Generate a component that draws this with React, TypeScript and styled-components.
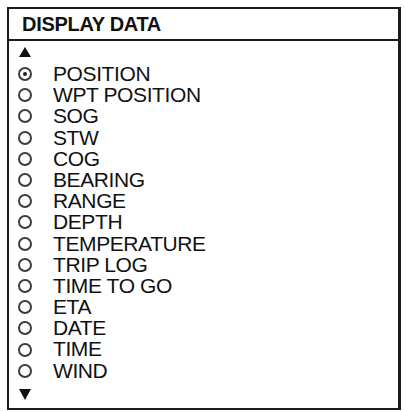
import React from "react";
import styled, { createGlobalStyle } from "styled-components";

const GlobalStyle = createGlobalStyle`
  html, body {
    margin: 0;
    padding: 0;
    background: #ffffff;
  }
  body {
    font-family: "Liberation Sans", Arial, Helvetica, sans-serif;
    color: #111111;
  }
`;

const Panel = styled.div`
  box-sizing: border-box;
  width: 394px;
  margin: 7px 0 0 7px;
  border: 2px solid #1c1c1c;
  border-right-width: 3px;
  background: #ffffff;
`;

const Title = styled.div`
  height: 30px;
  line-height: 30px;
  padding-left: 13px;
  border-bottom: 2px solid #1c1c1c;
  font-size: 20px;
  font-weight: 700;
  letter-spacing: -0.3px;
  color: #111111;
`;

const Body = styled.div`
  display: flex;
  flex-direction: column;
  padding: 6px 0 8px 9px;
`;

const Arrow = styled.svg<{ $gap: "top" | "bottom" }>`
  display: block;
  width: 12px;
  height: ${(p) => (p.$gap === "top" ? 10 : 11)}px;
  margin: ${(p) => (p.$gap === "top" ? "0 0 6px 1px" : "8px 0 0 1px")};
  fill: #111111;
`;

const Row = styled.div`
  display: flex;
  align-items: center;
  height: 21.2px;
`;

const Radio = styled.span<{ $checked: boolean }>`
  box-sizing: border-box;
  position: relative;
  flex: none;
  width: 14px;
  height: 14px;
  margin-top: 1px;
  border: 2.5px solid #3d3d3d;
  border-radius: 50%;
  &::after {
    content: "";
    display: ${(p) => (p.$checked ? "block" : "none")};
    position: absolute;
    left: 2.5px;
    top: 2.5px;
    width: 4px;
    height: 4px;
    border-radius: 50%;
    background: #222222;
  }
`;

const Label = styled.span`
  margin-left: 21px;
  font-size: 21px;
  line-height: 21.2px;
  letter-spacing: -0.4px;
  white-space: nowrap;
  color: #111111;
`;

const items = [
  "POSITION",
  "WPT POSITION",
  "SOG",
  "STW",
  "COG",
  "BEARING",
  "RANGE",
  "DEPTH",
  "TEMPERATURE",
  "TRIP LOG",
  "TIME TO GO",
  "ETA",
  "DATE",
  "TIME",
  "WIND",
];

export default function App() {
  const selected = "POSITION";
  return (
    <>
      <GlobalStyle />
      <Panel>
        <Title>DISPLAY DATA</Title>
        <Body>
          <Arrow $gap="top" viewBox="0 0 12 10">
            <polygon points="6,0 12,10 0,10" />
          </Arrow>
          {items.map((item) => (
            <Row key={item}>
              <Radio $checked={item === selected} />
              <Label>{item}</Label>
            </Row>
          ))}
          <Arrow $gap="bottom" viewBox="0 0 12 11">
            <polygon points="0,0 12,0 6,11" />
          </Arrow>
        </Body>
      </Panel>
    </>
  );
}
